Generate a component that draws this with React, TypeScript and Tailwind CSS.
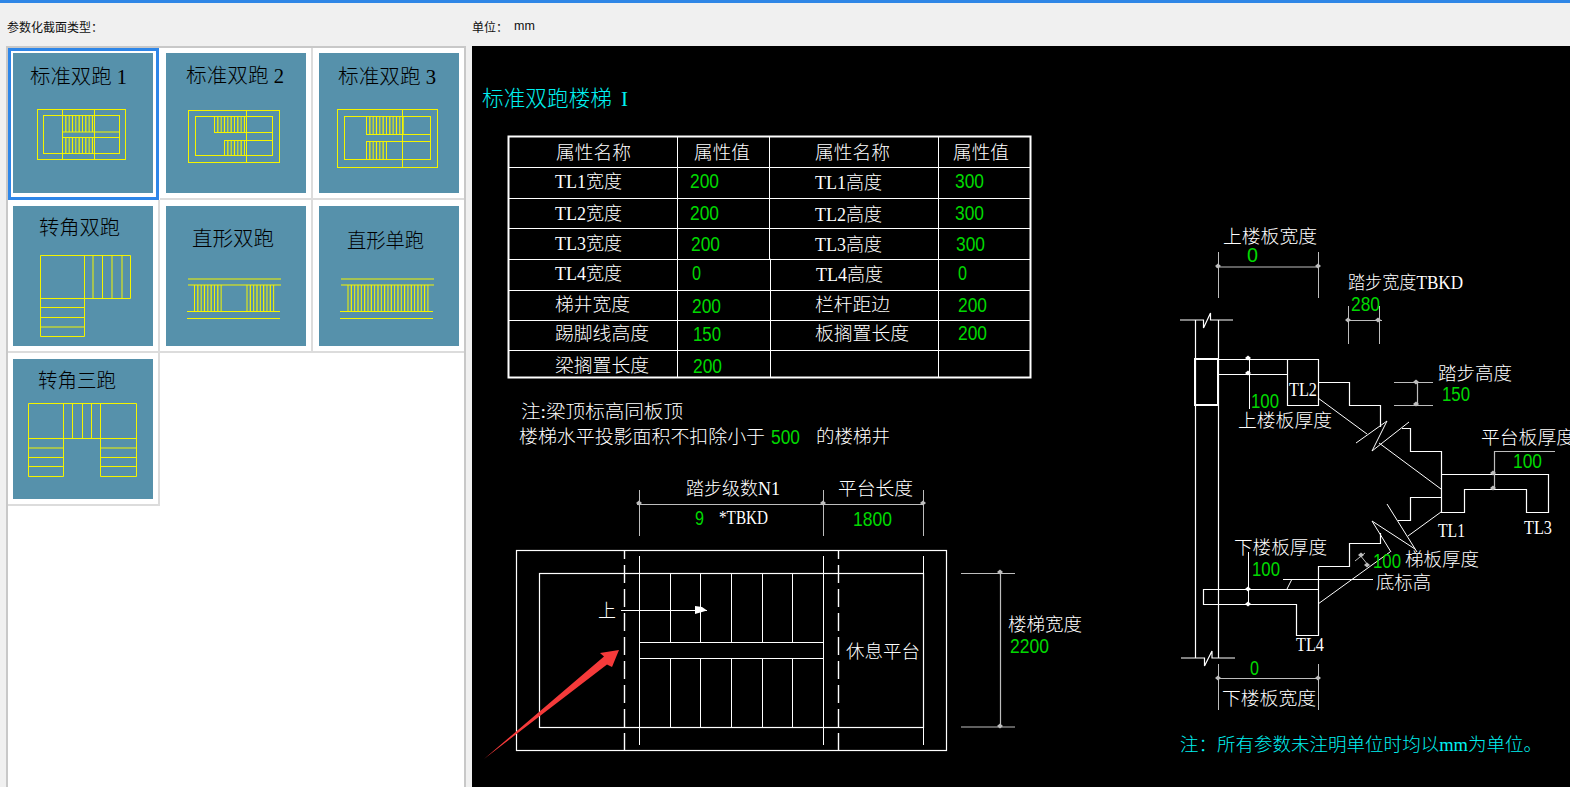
import React from "react";

const CJK = "font-['Liberation_Serif','Noto_Sans_CJK_SC',serif]";
const WHITE = "#ffffff";
const GREEN = "#00d800";
const CYAN = "#00f0f0";
const GREY = "#bdbdbd";

type TP = { x: number; cy: number; w?: number; s?: number; c?: string; t: string };
function T({ x, cy, w, s = 18, c = WHITE, t }: TP) {
  return (
    <text x={x} y={cy + s * 0.37} fontSize={s} fill={c} fontWeight={300} textLength={w} lengthAdjust={w ? "spacingAndGlyphs" : undefined}>
      {t}
    </text>
  );
}
function N({ x, cy, w, t, c = GREEN, s = 20 }: TP) {
  return (
    <text x={x} y={cy + s * 0.36} fontSize={s} fill={c} fontFamily="'Liberation Sans',sans-serif" textLength={w} lengthAdjust="spacingAndGlyphs">
      {t}
    </text>
  );
}
function L({ p, c = WHITE, w = 1.2 }: { p: string; c?: string; w?: number }) {
  return <polyline points={p} fill="none" stroke={c} strokeWidth={w} />;
}
function Dot({ x, y, c = GREY }: { x: number; y: number; c?: string }) {
  return <polygon points={`${x - 3},${y} ${x},${y - 2.5} ${x + 3},${y} ${x},${y + 2.5}`} fill={c} />;
}

const Y = "#f4f400";
function Ln({ x1, y1, x2, y2, w = 1 }: { x1: number; y1: number; x2: number; y2: number; w?: number }) {
  return <line x1={x1 - 0} y1={y1} x2={x2} y2={y2} stroke={Y} strokeWidth={w} />;
}
function Steps({ a, b, y1, y2, d = 3.33 }: { a: number; b: number; y1: number; y2: number; d?: number }) {
  const n = Math.round((b - a) / d);
  return (
    <>
      {Array.from({ length: n + 1 }).map((_, i) => (
        <Ln key={i} x1={a + i * d} x2={a + i * d} y1={y1} y2={y2} w={i % 2 ? 1.2 : 1} />
      ))}
    </>
  );
}
function TT({ x, w, cy, t }: { x: number; w: number; cy: number; t: string }) {
  return (
    <text x={x} y={cy + 8} fontSize={20} fill="#000000" fontWeight={300} textLength={w} lengthAdjust="spacingAndGlyphs">
      {t}
    </text>
  );
}
function R({ x, y, w, h }: { x: number; y: number; w: number; h: number }) {
  return <rect x={x} y={y} width={w} height={h} fill="none" stroke={Y} strokeWidth={1} />;
}

function Tile({ ox, oy, children }: { ox: number; oy: number; children: React.ReactNode }) {
  return (
    <svg width={140} height={140} viewBox={`${ox} ${oy} 140 140`} className={`block bg-[#5691ab] ${CJK}`}>
      {children}
    </svg>
  );
}

function Thumbs() {
  const cell = "border-r-2 border-b-2 border-[#dcdcdc] pl-[6px] pt-[6px]";
  const top = "border-r-2 border-b-2 border-[#dcdcdc] pl-[6px] pt-[5px]";
  return (
    <div className="grid grid-cols-[152px_153px_153px] grid-rows-[152px_153px_153px]">
      <div className="border-[3px] border-[#2e86e8] mr-[1px] pl-[2px] pt-[2px]">
        <Tile ox={13} oy={53}>
          <TT x={30} w={97} cy={76} t="标准双跑 1" />
          <R x={37.5} y={109.5} w={88} h={50} />
          <R x={43.5} y={115.5} w={76} h={38} />
          <Ln x1={62.5} x2={62.5} y1={109} y2={160} />
          <Ln x1={94.5} x2={94.5} y1={109} y2={160} />
          <Ln x1={62} x2={120} y1={132} y2={132} />
          <Ln x1={62} x2={120} y1={137.5} y2={137.5} />
          <Steps a={62.5} b={91} y1={116} y2={132} />
          <Steps a={62.5} b={91} y1={138} y2={153} />
        </Tile>
      </div>
      <div className={top}>
        <Tile ox={166} oy={53}>
          <TT x={186} w={98} cy={75} t="标准双跑 2" />
          <R x={188.5} y={110.5} w={91} h={52} />
          <R x={195.5} y={116.5} w={77} h={39} />
          <Ln x1={246.5} x2={246.5} y1={110} y2={163} />
          <Ln x1={214} x2={273} y1={132.5} y2={132.5} />
          <Ln x1={224} x2={273} y1={140.5} y2={140.5} />
          <Steps a={214.5} b={246} y1={116} y2={132} />
          <Steps a={224.5} b={246} y1={141} y2={156} />
        </Tile>
      </div>
      <div className={top}>
        <Tile ox={319} oy={53}>
          <TT x={338} w={98} cy={76} t="标准双跑 3" />
          <R x={337.5} y={109.5} w={100} h={58} />
          <R x={344.5} y={116.5} w={86} h={43} />
          <Ln x1={402.5} x2={402.5} y1={109} y2={168} />
          <Ln x1={366} x2={431} y1={134.5} y2={134.5} />
          <Ln x1={366} x2={431} y1={141.5} y2={141.5} />
          <Steps a={366.5} b={402} y1={116} y2={134} />
          <Steps a={366.5} b={388} y1={141} y2={160} />
        </Tile>
      </div>

      <div className={cell + " !pl-[5px]"}>
        <Tile ox={13} oy={206}>
          <TT x={39} w={81} cy={227} t="转角双跑" />
          <polygon points="40.5,255.5 130.5,255.5 130.5,298.5 84.5,298.5 84.5,336.5 40.5,336.5" fill="none" stroke={Y} />
          {[84.5, 93, 102.5, 112, 122].map((x) => (
            <Ln key={x} x1={x} x2={x} y1={255} y2={299} />
          ))}
          {[298.5, 307.5, 317.5, 327].map((y) => (
            <Ln key={y} x1={40} x2={84} y1={y} y2={y} />
          ))}
        </Tile>
      </div>
      <div className={cell}>
        <Tile ox={166} oy={206}>
          <TT x={192} w={82} cy={238} t="直形双跑" />
          <Ln x1={188} x2={281} y1={279} y2={279} />
          <Ln x1={188} x2={281} y1={285} y2={285} />
          <Ln x1={187} x2={280} y1={311.5} y2={311.5} />
          <Ln x1={187} x2={280} y1={318.5} y2={318.5} />
          <Steps a={194.5} b={221} y1={285} y2={311} />
          <Steps a={247} b={273.5} y1={285} y2={311} />
        </Tile>
      </div>
      <div className={cell}>
        <Tile ox={319} oy={206}>
          <TT x={347} w={77} cy={240} t="直形单跑" />
          <Ln x1={341} x2={434} y1={279} y2={279} />
          <Ln x1={341} x2={434} y1={285} y2={285} />
          <Ln x1={340} x2={433} y1={311.5} y2={311.5} />
          <Ln x1={340} x2={433} y1={318.5} y2={318.5} />
          <Steps a={348} b={427} y1={285} y2={311} />
        </Tile>
      </div>

      <div className={cell + " !pl-[5px]"}>
        <Tile ox={13} oy={359}>
          <TT x={38} w={78} cy={380} t="转角三跑" />
          <polygon points="28.5,403.5 136.5,403.5 136.5,476.5 100.5,476.5 100.5,438.5 63.5,438.5 63.5,476.5 28.5,476.5" fill="none" stroke={Y} />
          {[72.5, 82.5, 91.5, 63.5, 100.5].map((x) => (
            <Ln key={x} x1={x} x2={x} y1={403} y2={439} />
          ))}
          {[438.5, 448, 457.5, 466.5].map((y) => (
            <React.Fragment key={y}>
              <Ln x1={28} x2={63} y1={y} y2={y} />
              <Ln x1={100} x2={137} y1={y} y2={y} />
            </React.Fragment>
          ))}
        </Tile>
      </div>
    </div>
  );
}

function PropTable() {
  const hs = [136.5, 167.5, 198.5, 228.5, 259.5, 290.5, 320.5, 350.5, 377.5];
  const lab: [number, number, number, string][] = [
    [555, 181, 67, "TL1宽度"], [555, 213, 67, "TL2宽度"], [555, 243, 67, "TL3宽度"], [555, 273, 67, "TL4宽度"],
    [555, 304, 75, "梯井宽度"], [555, 333, 94, "踢脚线高度"], [555, 365, 94, "梁搁置长度"],
    [815, 182, 67, "TL1高度"], [815, 214, 67, "TL2高度"], [815, 244, 67, "TL3高度"], [816, 274, 67, "TL4高度"],
    [815, 304, 75, "栏杆距边"], [815, 333, 94, "板搁置长度"],
  ];
  const val: [number, number, number, string][] = [
    [690, 181, 29, "200"], [690, 213, 29, "200"], [691, 244, 29, "200"], [692, 273, 9, "0"], [692, 306, 29, "200"], [693, 334, 28, "150"], [693, 366, 29, "200"],
    [955, 181, 29, "300"], [955, 213, 29, "300"], [956, 244, 29, "300"], [958, 273, 9, "0"], [958, 305, 29, "200"], [958, 333, 29, "200"],
  ];
  return (
    <g>
      <rect x={508.5} y={136.5} width={522} height={241} fill="none" stroke={WHITE} strokeWidth={2} />
      {hs.slice(1, -1).map((y) => (
        <L key={y} p={`508,${y} 1030,${y}`} w={1} />
      ))}
      <L p="677.5,136 677.5,378" w={1} />
      <L p="769.5,136 769.5,259 770.5,259 770.5,378" w={1} />
      <L p="938.5,136 938.5,378" w={1} />
      <T x={556} cy={152} w={75} t="属性名称" />
      <T x={694} cy={152} w={56} t="属性值" />
      <T x={815} cy={152} w={75} t="属性名称" />
      <T x={953} cy={152} w={56} t="属性值" />
      {lab.map(([x, y, w, t]) => (
        <T key={t} x={x} cy={y} w={w} t={t} />
      ))}
      {val.map(([x, y, w, t], i) => (
        <N key={i} x={x} cy={y} w={w} t={t} />
      ))}
    </g>
  );
}

function Plan() {
  return (
    <g>
      <T x={521} cy={411} w={162} t="注:梁顶标高同板顶" />
      <T x={519} cy={436} w={246} t="楼梯水平投影面积不扣除小于" />
      <N x={771} cy={437} w={29} t="500" />
      <T x={816} cy={436} w={74} t="的楼梯井" />

      <T x={686} cy={488} w={94} t="踏步级数N1" />
      <T x={838} cy={488} w={75} t="平台长度" />
      <L p="637,504.5 924,504.5" c={GREY} />
      <L p="639.5,490 639.5,536" c={GREY} w={1} />
      <L p="823.5,490 823.5,536" c={GREY} w={1} />
      <L p="923.5,490 923.5,536" c={GREY} w={1} />
      <Dot x={639} y={503} />
      <Dot x={823} y={503} />
      <Dot x={923} y={503} />
      <N x={695} cy={518} w={9} t="9" />
      <T x={719} cy={517} w={49} t="*TBKD" />
      <N x={853} cy={519} w={39} t="1800" />

      <rect x={516.5} y={550.5} width={430} height={200} fill="none" stroke={WHITE} strokeWidth={1.2} />
      <rect x={539.5} y={573.5} width={384} height={154} fill="none" stroke={WHITE} strokeWidth={1.2} />
      <line x1={624.5} x2={624.5} y1={550} y2={750} stroke={WHITE} strokeWidth={1.4} strokeDasharray="18 6" strokeDashoffset={9} />
      <line x1={838.5} x2={838.5} y1={550} y2={750} stroke={WHITE} strokeWidth={1.4} strokeDasharray="18 6" strokeDashoffset={9} />
      {[639.5, 823.5, 923.5].map((x) => (
        <L key={x} p={`${x},556 ${x},745`} w={1} />
      ))}
      {[670.5, 700.5, 731.5, 762.5, 792.5].map((x) => (
        <React.Fragment key={x}>
          <L p={`${x},573 ${x},642`} w={1} />
          <L p={`${x},658 ${x},727`} w={1} />
        </React.Fragment>
      ))}
      <L p="639,642.5 823,642.5" w={1} />
      <L p="639,658.5 823,658.5" w={1} />
      <T x={598} cy={610} w={18} t="上" />
      <L p="621,610.5 707,610.5" w={1} />
      <polygon points="695,606 702,607 707,610.5 702,612 695,614" fill={WHITE} />
      <T x={846} cy={651} w={74} t="休息平台" />

      <L p="961,573.5 1015,573.5" c={GREY} />
      <L p="961,727 1015,727" c={GREY} />
      <L p="1000.5,573 1000.5,727" c={GREY} />
      <Dot x={1000} y={572} />
      <Dot x={1000} y={726} />
      <T x={1008} cy={624} w={74} t="楼梯宽度" />
      <N x={1010} cy={646} w={39} t="2200" />

      <polygon points="484,759 604,656.5 600,653 619,650 612,667 607,664.5" fill="#f53a3a" />
    </g>
  );
}

function Section() {
  return (
    <g>
      <T x={1223} cy={236} w={94} t="上楼板宽度" />
      <N x={1247} cy={255} w={11} t="0" />
      <L p="1216,267 1319,267" c={GREY} />
      <L p="1218.5,252 1218.5,298" c={GREY} w={1} />
      <L p="1318.5,252 1318.5,298" c={GREY} w={1} />
      <Dot x={1218} y={266} />
      <Dot x={1318} y={266} />

      <T x={1348} cy={282} w={115} t="踏步宽度TBKD" />
      <N x={1351} cy={304} w={29} t="280" />
      <L p="1346,320.5 1382,320.5" c={GREY} />
      <L p="1348.5,306 1348.5,344" c={GREY} w={1} />
      <L p="1379.5,306 1379.5,344" c={GREY} w={1} />
      <Dot x={1348} y={320} />
      <Dot x={1378} y={320} />

      <L p="1180,320 1203.5,320 1203.5,328 1210.5,313 1210.5,320 1233,320" />
      <L p="1181,658 1204.5,658 1204.5,666 1212,651 1212,658 1235,658" />
      <L p="1195.5,320 1195.5,658" />
      <L p="1218.5,320 1218.5,658" />
      <rect x={1195} y={359} width={23} height={46} fill="none" stroke={WHITE} strokeWidth={2} />
      <L p="1218,359.5 1318.5,359.5 1318.5,405.5 1287.5,405.5 1287.5,359.5" />
      <L p="1218,374.5 1287,374.5" />
      <L p="1318,382.5 1349.5,382.5 1349.5,405.5 1380.5,405.5 1380.5,427" />
      <L p="1318,398 1367,434" w={1} />
      <L p="1356,443 1387,421 1372,451 1409,422" w={1} />
      <L p="1402,428.5 1410.5,428.5 1410.5,451.5 1441.5,451.5 1441.5,512.5 1464.5,512.5 1464.5,489.5 1526.5,489.5 1526.5,512.5 1548.5,512.5 1548.5,474.5 1441.5,474.5" />
      <L p="1379,443 1441,489" w={1} />
      <L p="1441,497.5 1410.5,497.5 1410.5,520.5 1398,520.5" />
      <L p="1441,512 1408,536" w={1} />
      <L p="1387,504 1417,552" w={1} />
      <L p="1415,549 1372,521 1391,552" w={1} />
      <L p="1380.5,533 1380.5,543.5 1349.5,543.5 1349.5,566.5 1318.5,566.5 1318.5,635.5 1296.5,635.5 1296.5,604.5 1203.5,604.5 1203.5,589.5 1318,589.5" />
      <L p="1318,604 1390,552" w={1} />
      <L p="1283,579.5 1373,579.5" />
      <L p="1287,589 1292,579" w={1} />

      <L p="1249.5,357 1249.5,409" w={1} />
      <Dot x={1248} y={358} c={WHITE} />
      <Dot x={1248} y={373} c={WHITE} />
      <L p="1248.5,552 1248.5,604" w={1} />
      <Dot x={1248} y={589} c={WHITE} />
      <Dot x={1248} y={604} c={WHITE} />
      <N x={1251} cy={401} w={28} t="100" />
      <T x={1238} cy={420} w={94} t="上楼板厚度" />
      <T x={1289} cy={389} w={28} t="TL2" />

      <T x={1438} cy={373} w={74} t="踏步高度" />
      <N x={1442} cy={394} w={28} t="150" />
      <L p="1394,382.5 1433,382.5" c={GREY} />
      <L p="1394,405.5 1433,405.5" c={GREY} />
      <L p="1417.5,382 1417.5,405" c={GREY} />
      <Dot x={1416} y={382} />
      <Dot x={1416} y={404} />

      <T x={1481} cy={437} w={94} t="平台板厚度" />
      <N x={1513} cy={461} w={29} t="100" />
      <L p="1555,451.5 1494.5,451.5 1494.5,489" c={GREY} />
      <Dot x={1493} y={473} />
      <Dot x={1493} y={488} />

      <T x={1438} cy={530} w={27} t="TL1" />
      <T x={1524} cy={527} w={28} t="TL3" />
      <T x={1234} cy={547} w={93} t="下楼板厚度" />
      <N x={1252} cy={569} w={28} t="100" />
      <N x={1373} cy={561} w={28} t="100" />
      <T x={1405} cy={559} w={74} t="梯板厚度" />
      <T x={1376} cy={582} w={55} t="底标高" />
      <T x={1296} cy={644} w={28} t="TL4" />
      <L p="1355,561 1365,553" c={GREY} w={1} />
      <L p="1360,555 1368,565" c={GREY} w={1} />
      <Dot x={1361} y={555} />
      <Dot x={1367} y={565} />

      <N x={1250} cy={668} w={9} t="0" />
      <L p="1216,678.5 1319,678.5" c={GREY} />
      <L p="1218.5,664 1218.5,710" c={GREY} w={1} />
      <L p="1318.5,664 1318.5,710" c={GREY} w={1} />
      <Dot x={1218} y={678} />
      <Dot x={1318} y={678} />
      <T x={1222} cy={698} w={94} t="下楼板宽度" />
      <T x={1180} cy={744} w={362} c={CYAN} t="注：所有参数未注明单位时均以mm为单位。" />
    </g>
  );
}

export default function App() {
  return (
    <div className="w-[1570px] h-[787px] overflow-hidden flex flex-col bg-[#f0f0f0] font-['Noto_Sans_CJK_SC',sans-serif]">
      <div className="h-[3px] bg-[#2f86e6]" />
      <div className="h-[43px] flex items-center pt-[4px] text-[12px] text-[#111]">
        <span className="w-[472px] pl-[7px]">参数化截面类型：</span>
        <span>单位：</span>
        <span className="ml-[6px] font-['Liberation_Sans',sans-serif] text-[12.5px]">mm</span>
      </div>
      <div className="flex-1 flex min-h-0">
        <div className="w-[460px] ml-[6px] bg-white border-2 border-[#c8c8c8] border-b-0 overflow-hidden">
          <Thumbs />
        </div>
        <svg viewBox="472 46 1098 741" width={1098} height={741} className={`ml-[6px] block bg-black ${CJK}`}>
          <T x={482} cy={98} w={130} s={22} c={CYAN} t="标准双跑楼梯" />
          <T x={621} cy={98} w={7} s={22} c={CYAN} t="I" />
          <PropTable />
          <Plan />
          <Section />
        </svg>
      </div>
    </div>
  );
}
